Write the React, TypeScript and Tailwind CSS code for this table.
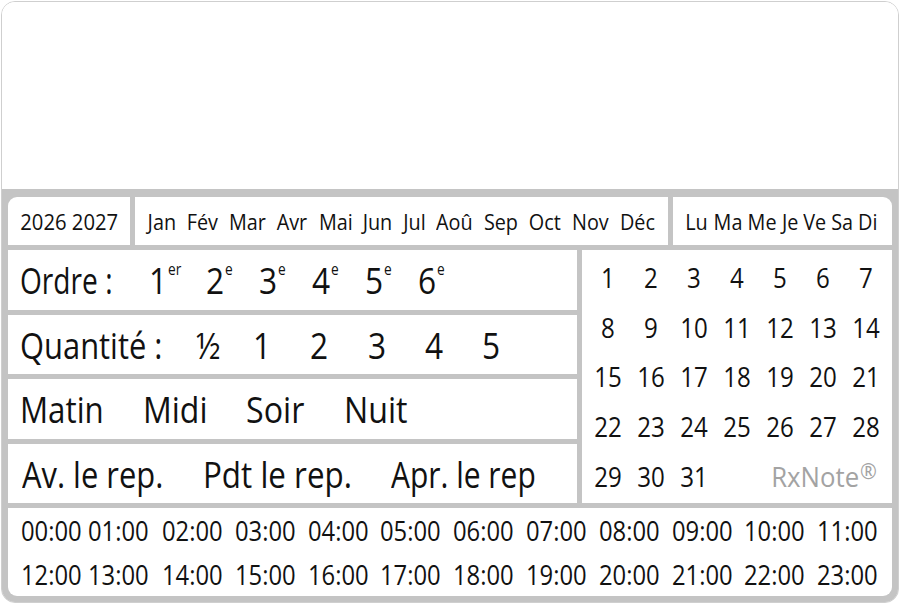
import React from "react";

const months = ["Jan", "Fév", "Mar", "Avr", "Mai", "Jun", "Jul", "Aoû", "Sep", "Oct", "Nov", "Déc"];
const days = ["Lu", "Ma", "Me", "Je", "Ve", "Sa", "Di"];
const ordre = [
  ["1", "er", "w-[57px]"],
  ["2", "e", "w-[53px]"],
  ["3", "e", "w-[53px]"],
  ["4", "e", "w-[53px]"],
  ["5", "e", "w-[53px]"],
  ["6", "e", "w-[53px]"],
];
const qty = [
  ["½", "w-[57px]"],
  ["1", "w-[57.3px]"],
  ["2", "w-[57.3px]"],
  ["3", "w-[57.3px]"],
  ["4", "w-[57.3px]"],
  ["5", "w-[57.3px]"],
];
const timeBoxes = [
  "w-[67px]",
  "w-[74px]",
  "w-[72.8px]",
  "w-[72.8px]",
  "w-[72.8px]",
  "w-[72.8px]",
  "w-[72.8px]",
  "w-[72.8px]",
  "w-[72.8px]",
  "w-[72.8px]",
  "w-[72.8px]",
  "w-[60px]",
];
const hours1 = Array.from({ length: 12 }, (_, i) => String(i).padStart(2, "0") + ":00");
const hours2 = Array.from({ length: 12 }, (_, i) => String(i + 12).padStart(2, "0") + ":00");
const dates = Array.from({ length: 31 }, (_, i) => String(i + 1));

function TimeRow({ hours }: { hours: string[] }) {
  return (
    <div className="flex pl-[13px]">
      {hours.map((h, i) => (
        <div key={h} className={"shrink-0 " + timeBoxes[i]}>
          <span className="inline-block whitespace-nowrap origin-left scale-x-[0.85]">{h}</span>
        </div>
      ))}
    </div>
  );
}

export default function App() {
  return (
    <div className="w-[900px] h-[604px] bg-white pt-[1px] px-[1px] font-['Open_Sans',sans-serif] text-[#111]">
      <div className="h-[602px] border border-[#cfcfcf] rounded-[14px] overflow-hidden flex flex-col">
        <div className="h-[187px] bg-white" />
        <div className="flex-1 bg-[#c4c4c4] pt-[8px] px-[6px] pb-[6px] flex flex-col gap-[5px]">
          {/* header */}
          <div className="h-[48px] flex gap-[5px] text-[22px] leading-none">
            <div className="w-[122px] bg-white rounded-tl-[9px] flex items-center justify-center">
              <span className="inline-block whitespace-nowrap scale-x-[0.92]">2026 2027</span>
            </div>
            <div className="flex-1 bg-white flex items-center justify-between px-[11px]">
              {months.map((m) => (
                <span key={m} className="inline-block whitespace-nowrap scale-x-[0.9]">
                  {m}
                </span>
              ))}
            </div>
            <div className="w-[219px] bg-white rounded-tr-[9px] flex items-center justify-between pl-[11px] pr-[13px]">
              {days.map((d) => (
                <span key={d} className="inline-block whitespace-nowrap scale-x-[0.9]">
                  {d}
                </span>
              ))}
            </div>
          </div>
          {/* middle */}
          <div className="h-[253px] flex gap-[5px]">
            <div className="w-[569px] flex flex-col gap-[5px] text-[37px] leading-none">
              <div className="flex-1 bg-white flex items-center pl-[12px]">
                <div className="w-[129px] shrink-0">
                  <span className="inline-block whitespace-nowrap origin-left scale-x-[0.76]">Ordre :</span>
                </div>
                {ordre.map(([n, s, w]) => (
                  <div key={n} className={"shrink-0 " + w}>
                    <span className="inline-flex items-start whitespace-nowrap origin-left scale-x-[0.855]">
                      <span>{n}</span>
                      <span className="text-[16px] ml-[1px]">{s}</span>
                    </span>
                  </div>
                ))}
              </div>
              <div className="flex-1 bg-white flex items-center pl-[12px]">
                <div className="w-[176px] shrink-0">
                  <span className="inline-block whitespace-nowrap origin-left scale-x-[0.835]">Quantité :</span>
                </div>
                {qty.map(([q, w]) => (
                  <div key={q} className={"shrink-0 " + w}>
                    <span className="inline-block whitespace-nowrap origin-left scale-x-[0.855]">{q}</span>
                  </div>
                ))}
              </div>
              <div className="flex-1 bg-white flex items-center pl-[12px]">
                <div className="w-[123px] shrink-0">
                  <span className="inline-block whitespace-nowrap origin-left scale-x-[0.845]">Matin</span>
                </div>
                <div className="w-[103px] shrink-0">
                  <span className="inline-block whitespace-nowrap origin-left scale-x-[0.865]">Midi</span>
                </div>
                <div className="w-[98px] shrink-0">
                  <span className="inline-block whitespace-nowrap origin-left scale-x-[0.87]">Soir</span>
                </div>
                <div className="shrink-0">
                  <span className="inline-block whitespace-nowrap origin-left scale-x-[0.87]">Nuit</span>
                </div>
              </div>
              <div className="flex-1 bg-white flex items-center pl-[14px]">
                <div className="w-[181px] shrink-0">
                  <span className="inline-block whitespace-nowrap origin-left scale-x-[0.835]">Av. le rep.</span>
                </div>
                <div className="w-[188px] shrink-0">
                  <span className="inline-block whitespace-nowrap origin-left scale-x-[0.848]">Pdt le rep.</span>
                </div>
                <div className="shrink-0">
                  <span className="inline-block whitespace-nowrap origin-left scale-x-[0.81]">Apr. le rep</span>
                </div>
              </div>
            </div>
            <div className="flex-1 bg-white grid grid-cols-7 grid-rows-5 px-[5px] py-[2px] text-[28px] leading-none">
              {dates.map((d) => (
                <div key={d} className="flex items-center justify-center">
                  <span className="inline-block whitespace-nowrap scale-x-[0.86]">{d}</span>
                </div>
              ))}
              <div className="col-span-4 flex items-center justify-end pr-[10px] text-[#a3a3a3]">
                <span className="inline-flex items-start whitespace-nowrap origin-right scale-x-[0.92]">
                  <span>RxNote</span>
                  <span className="text-[22px] -mt-[3px] ml-[1px]">®</span>
                </span>
              </div>
            </div>
          </div>
          {/* times */}
          <div className="flex-1 bg-white rounded-b-[9px] flex flex-col justify-center text-[28px] leading-none gap-[16px]">
            <TimeRow hours={hours1} />
            <TimeRow hours={hours2} />
          </div>
        </div>
      </div>
    </div>
  );
}
